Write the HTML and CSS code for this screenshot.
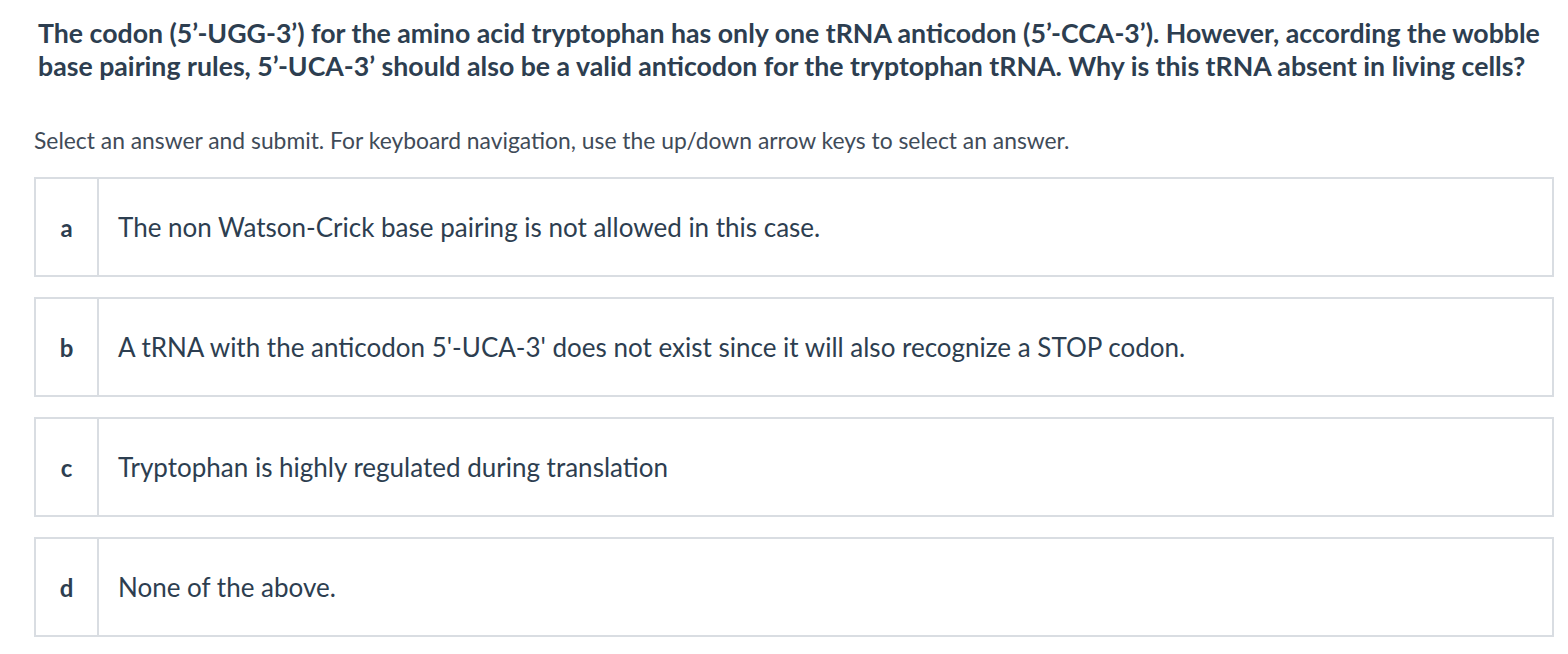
FILE: index.html
```html
<!DOCTYPE html>
<html>
<head>
<meta charset="utf-8">
<link rel="stylesheet" href="styles.css">
</head>
<body>
<div class="page">
  <h1 class="question">The codon (5’-UGG-3’) for the amino acid tryptophan has only one tRNA anticodon (5’-CCA-3’). However, according the wobble base pairing rules, 5’-UCA-3’ should also be a valid anticodon for the tryptophan tRNA. Why is this tRNA absent in living cells?</h1>
  <p class="instructions">Select an answer and submit. For keyboard navigation, use the up/down arrow keys to select an answer.</p>
  <div class="options">
    <div class="option"><div class="label">a</div><div class="text">The non Watson-Crick base pairing is not allowed in this case.</div></div>
    <div class="option"><div class="label">b</div><div class="text">A tRNA with the anticodon 5'-UCA-3' does not exist since it will also recognize a STOP codon.</div></div>
    <div class="option"><div class="label">c</div><div class="text">Tryptophan is highly regulated during translation</div></div>
    <div class="option"><div class="label">d</div><div class="text">None of the above.</div></div>
  </div>
</div>
</body>
</html>
```
FILE: styles.css
```css
html, body {
  margin: 0;
  padding: 0;
  background: #ffffff;
}
body {
  font-family: Lato, "Noto Sans", sans-serif;
  color: #2d3e50;
}
.page {
  padding: 17px 14px 0 34px;
}
.question {
  margin: 0 0 0 4px;
  font-size: 26.7px;
  line-height: 33px;
  font-weight: 700;
  color: #2d3e50;
}
.instructions {
  margin: 43px 0 0 0;
  font-size: 22.85px;
  line-height: 28px;
  color: #3f4b58;
}
.options {
  margin-top: 23px;
  display: flex;
  flex-direction: column;
  gap: 20px;
}
.option {
  display: flex;
  height: 96px;
  border: 2px solid #d9dde2;
}
.label {
  width: 61px;
  flex: none;
  border-right: 2px solid #d9dde2;
  display: flex;
  align-items: center;
  justify-content: center;
  font-size: 24px;
  font-weight: 700;
}
.text {
  display: flex;
  align-items: center;
  padding-left: 19px;
  font-size: 26px;
}
```
